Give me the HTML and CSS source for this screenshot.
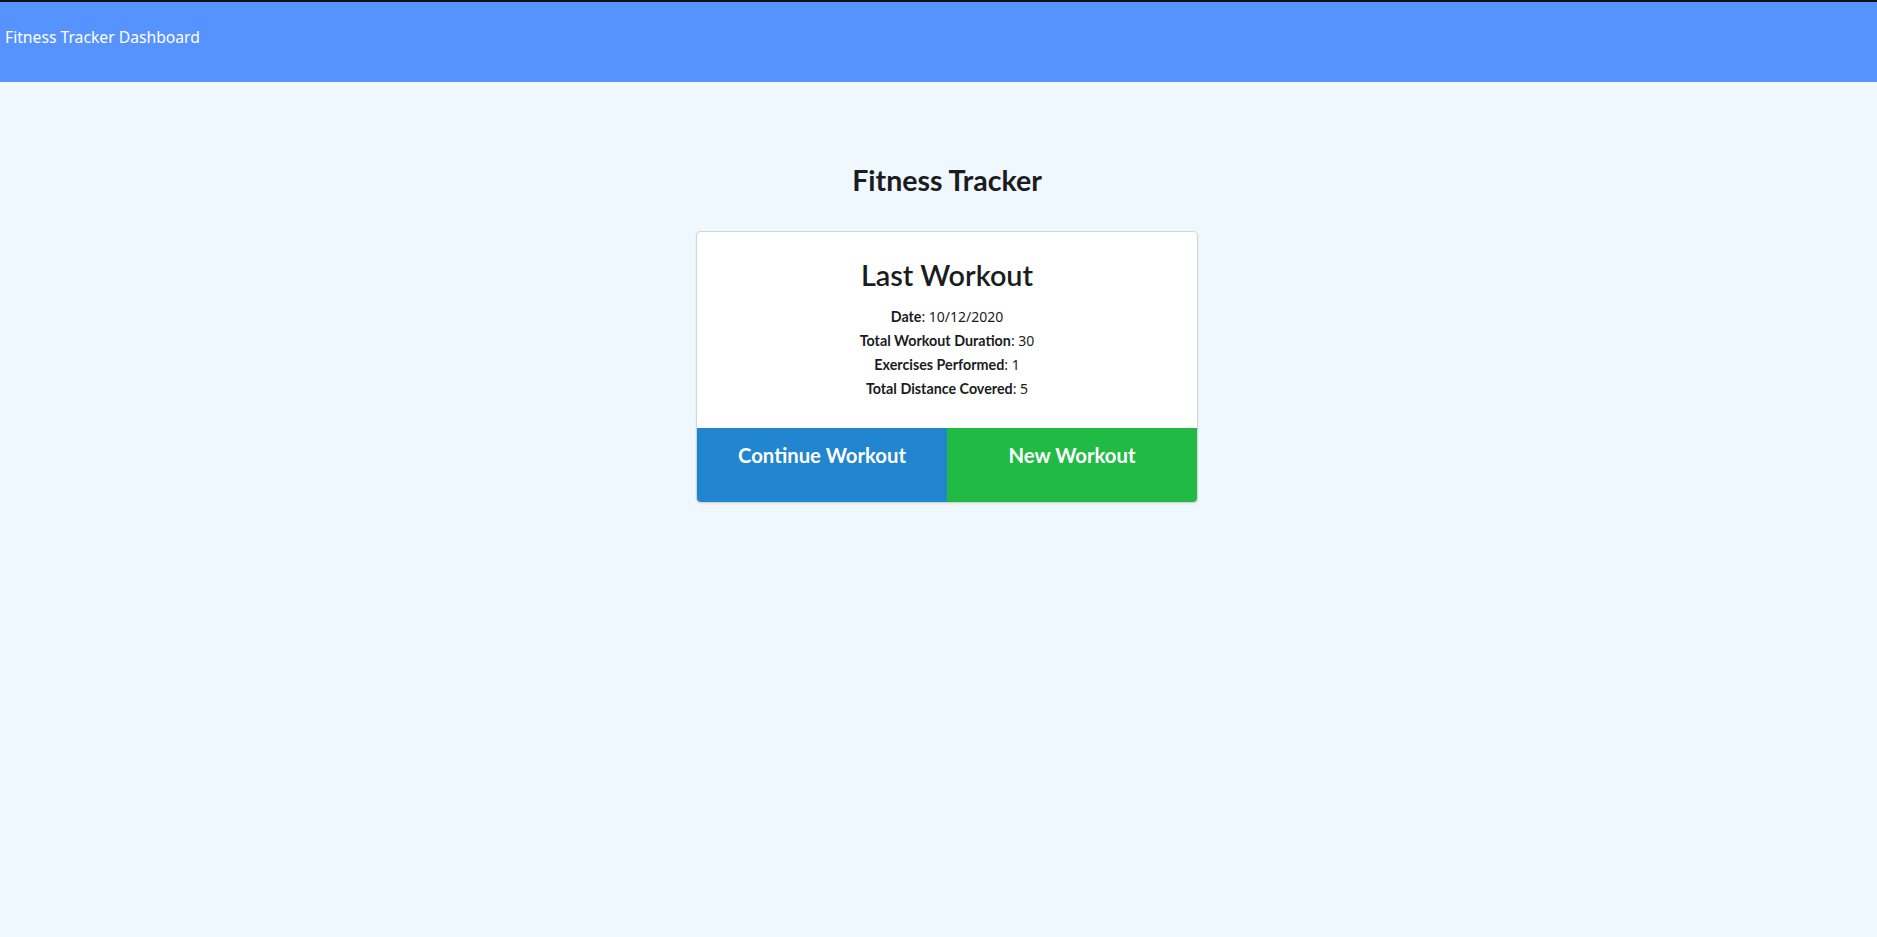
FILE: index.html
```
<!DOCTYPE html>
<html>
<head>
<meta charset="utf-8">
<title>Fitness Tracker</title>
<link rel="stylesheet" href="styles.css">
</head>
<body>
<header class="topbar">
  <span class="brand">Fitness Tracker Dashboard</span>
</header>
<main class="page">
  <h1 class="page-title">Fitness Tracker</h1>
  <section class="card">
    <div class="card-body">
      <h2 class="card-title">Last Workout</h2>
      <p class="stat"><strong>Date</strong>: 10/12/2020</p>
      <p class="stat"><strong>Total Workout Duration</strong>: 30</p>
      <p class="stat"><strong>Exercises Performed</strong>: 1</p>
      <p class="stat"><strong>Total Distance Covered</strong>: 5</p>
    </div>
    <div class="actions">
      <button class="btn btn-blue">Continue Workout</button>
      <button class="btn btn-green">New Workout</button>
    </div>
  </section>
</main>
</body>
</html>
```
FILE: styles.css
```
html, body {
  margin: 0;
  padding: 0;
}
body {
  background: #eff7ff;
  font-family: "Lato", "Noto Sans", sans-serif;
  color: #1b1c1d;
  min-height: 937px;
}
.topbar {
  border-top: 2px solid #111;
  background: #5793ff;
  box-sizing: border-box;
  height: 82px;
  display: flex;
  align-items: flex-start;
  padding: 25px 0 0 5px;
}
.brand {
  font-family: "Noto Sans", "Open Sans", sans-serif;
  font-size: 15.7px;
  line-height: 20px;
  color: #fff;
}
.page {
  display: flex;
  flex-direction: column;
  align-items: center;
  padding-left: 17px;
}
.page-title {
  font-family: "Lato", sans-serif;
  font-weight: 700;
  font-size: 28.5px;
  line-height: 34px;
  margin: 81px 0 35px;
}
.card {
  width: 500px;
  background: #fff;
  border-radius: 4px;
  box-shadow: 0 1px 3px 0 #d4d4d5, 0 0 0 1px #d4d4d5;
  overflow: hidden;
}
.card-body {
  padding: 25px 16px 27px;
  text-align: center;
}
.card-title {
  font-weight: 600;
  font-size: 28.8px;
  line-height: 36px;
  margin: 0 0 12px;
}
.stat {
  margin: 0;
  font-family: "Noto Sans", "Open Sans", sans-serif;
  font-size: 14px;
  line-height: 24px;
}
.stat strong {
  font-family: "Lato", sans-serif;
  font-weight: 700;
  font-size: 14.3px;
}
.actions {
  display: flex;
}
.btn {
  flex: 1;
  height: 74px;
  border: 0;
  margin: 0;
  padding: 15px 0 0;
  display: flex;
  justify-content: center;
  align-items: flex-start;
  color: #fff;
  font-family: "Lato", sans-serif;
  font-weight: 700;
  font-size: 20.3px;
  line-height: 24px;
}
.btn-blue { background: #2185d0; }
.btn-green { background: #21ba45; }
```
